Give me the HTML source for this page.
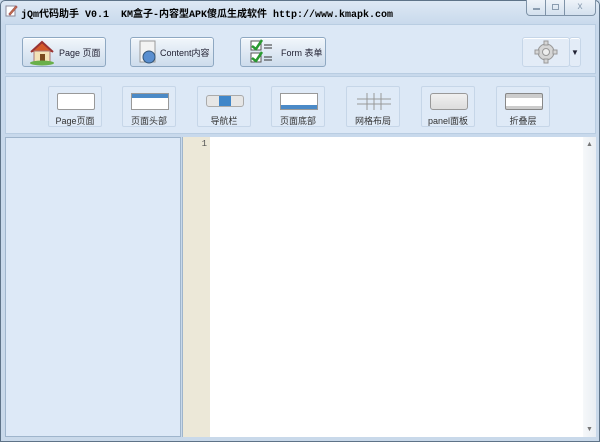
<!DOCTYPE html>
<html><head><meta charset="utf-8"><style>
*{margin:0;padding:0;box-sizing:border-box}
body{width:600px;height:442px;overflow:hidden;background:#c9d9ea;font-family:"Liberation Sans","Noto Sans CJK SC",sans-serif;position:relative}
.frame{position:absolute;left:0;top:0;width:600px;height:442px;border:1px solid #5e7388;border-radius:5px 5px 0 0;background:linear-gradient(#dde8f4,#c8d9ec 24px,#c9d9ea)}
.title{position:absolute;left:21px;top:5px;font:bold 10px "Liberation Mono","Noto Sans CJK SC",monospace;color:#000;white-space:pre}
.ctl{position:absolute;top:0;height:16px;border:1px solid #7f93a8;border-top:none;background:linear-gradient(#eef3f9,#d3e0ee)}
.bar1{position:absolute;left:5px;top:24px;width:591px;height:50px;background:#dce8f6;border:1px solid #b9cde2}
.bar2{position:absolute;left:5px;top:76px;width:591px;height:58px;background:#dce8f6;border:1px solid #b9cde2}
.bigbtn{position:absolute;top:12px;height:30px;border:1px solid #8ea8c2;border-radius:3px;background:linear-gradient(#f1f6fb,#cddcec);font-size:9px;color:#223;display:flex;align-items:center;box-shadow:inset 0 1px #fff;white-space:nowrap}
.sm{position:absolute;top:9px;width:54px;height:41px;border:1px solid #c6d6e8;border-radius:2px;background:#dfeaf7;font-size:9px;color:#333;text-align:center}
.sm .ic{position:absolute;left:8px;top:6px;width:38px;height:17px}
.sm span{position:absolute;left:0;right:0;top:27px}
.left{position:absolute;left:5px;top:137px;width:176px;height:300px;background:#dde9f7;border:1px solid #9fb5cc}
.gut{position:absolute;left:182px;top:137px;width:28px;height:300px;background:#ece8d8;border-left:1px solid #9fb5cc;font:9px "Liberation Mono",monospace;color:#555;text-align:right;padding:2px 3px 0 0}
.code{position:absolute;left:210px;top:137px;width:373px;height:300px;background:#fff}
.sb{position:absolute;left:583px;top:137px;width:13px;height:300px;background:linear-gradient(90deg,#f6f8fa,#e9eef3);color:#777;font-size:7px;text-align:center}
</style></head><body>
<div class="frame"></div>
<svg style="position:absolute;left:5px;top:4px" width="13" height="13"><rect x="1" y="2" width="9" height="10" fill="#fff" stroke="#889"/><path d="M4 10 L11 2 L12 3 L5 11Z" fill="#e8a030" stroke="#a55"/></svg>
<div class="title">jQm代码助手 V0.1  KM盒子-内容型APK傻瓜生成软件 http://www.kmapk.com</div>
<div class="ctl" style="left:526px;width:20px;border-radius:0 0 0 4px"><div style="position:absolute;left:6px;top:8px;width:7px;height:2px;background:#8a9cb0"></div></div>
<div class="ctl" style="left:545px;width:20px"><div style="position:absolute;left:6px;top:4px;width:7px;height:6px;border:1px solid #8a9cb0"></div></div>
<div class="ctl" style="left:564px;width:32px;border-radius:0 0 4px 0;color:#8a9cb0;font-size:10px;text-align:center;line-height:14px">x</div>

<div class="bar1">
 <div class="bigbtn" style="left:16px;width:84px"><svg width="30" height="30" style="margin:0 2px 0 4px"><path d="M4 15 L15 5 L26 15" fill="#d45a2a" stroke="#933" stroke-width="2"/><rect x="7" y="14" width="16" height="11" fill="#f3e2b8" stroke="#a77"/><rect x="13" y="17" width="5" height="8" fill="#7a4a20"/><ellipse cx="15" cy="26" rx="12" ry="2.5" fill="#6ab04a"/></svg>Page 页面</div>
 <div class="bigbtn" style="left:124px;width:84px"><svg width="22" height="26" style="margin:0 1px 0 6px"><rect x="3" y="2" width="15" height="21" fill="#f3f3f3" stroke="#999"/><circle cx="12" cy="18" r="6" fill="#5a8fd0" stroke="#357"/></svg>Content内容</div>
 <div class="bigbtn" style="left:234px;width:86px"><svg width="30" height="28" style="margin:0 2px 0 8px"><rect x="2" y="3" width="10" height="9" fill="#fff" stroke="#555"/><rect x="2" y="15" width="10" height="9" fill="#fff" stroke="#555"/><path d="M3 8 L7 11 L13 2 M3 20 L7 23 L13 14" stroke="#2a9a30" stroke-width="2.5" fill="none"/><path d="M15 7h8M15 10h8M15 19h8M15 22h8" stroke="#333"/></svg>Form 表单</div>
 <div class="bigbtn" style="left:516px;width:48px;background:#e3ecf7;border-color:#c6d6e8;justify-content:center"><svg width="24" height="24"><g fill="#d6d6d6" stroke="#999"><circle cx="12" cy="12" r="8"/><path d="M10 1h4v4h-4zM10 19h4v4h-4zM1 10h4v4H1zM19 10h4v4h-4z"/></g><circle cx="12" cy="12" r="3.5" fill="#eee" stroke="#999"/></svg></div>
 <div class="bigbtn" style="left:563px;width:12px;background:#e3ecf7;border-color:#c6d6e8;justify-content:center;font-size:8px">▼</div>
</div>

<div class="bar2">
 <div class="sm" style="left:42px"><div class="ic" style="border:1px solid #999;background:#fff;border-radius:2px"></div><span>Page页面</span></div>
 <div class="sm" style="left:116px"><div class="ic" style="border:1px solid #999;background:linear-gradient(#4b8ac7 0 4px,#fff 4px)"></div><span>页面头部</span></div>
 <div class="sm" style="left:191px"><div class="ic" style="top:8px;height:12px;border:1px solid #aaa;border-radius:3px;background:linear-gradient(90deg,#e6e6e6 0 12px,#3f86c9 12px 24px,#e6e6e6 24px)"></div><span>导航栏</span></div>
 <div class="sm" style="left:265px"><div class="ic" style="border:1px solid #999;background:linear-gradient(#fff 0 11px,#4b8ac7 11px)"></div><span>页面底部</span></div>
 <div class="sm" style="left:340px"><svg class="ic" viewBox="0 0 38 17"><path d="M12 0v17M19 0v17M26 0v17M2 6h34M2 11h34" stroke="#999"/></svg><span>网格布局</span></div>
 <div class="sm" style="left:415px"><div class="ic" style="border:1px solid #999;border-radius:3px;background:linear-gradient(#f0f0f0,#ddd)"></div><span>panel面板</span></div>
 <div class="sm" style="left:490px"><div class="ic" style="border:1px solid #888;border-radius:2px;background:linear-gradient(#ccc 0 4px,#fff 4px 12px,#ccc 12px)"></div><span>折叠层</span></div>
</div>

<div class="left"></div>
<div class="gut">1</div>
<div class="code"></div>
<div class="sb"><div style="margin-top:4px">▲</div><div style="position:absolute;bottom:4px;width:100%">▼</div></div>
</body></html>
